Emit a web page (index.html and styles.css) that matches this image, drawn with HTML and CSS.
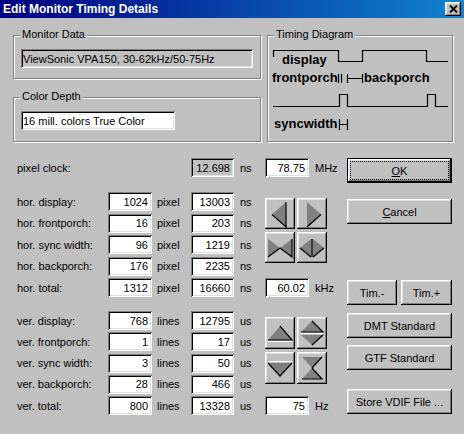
FILE: index.html
```html
<!DOCTYPE html>
<html>
<head>
<meta charset="utf-8">
<link rel="stylesheet" href="styles.css">
</head>
<body>
<div class="window">
  <div class="titlebar">
    <span class="title">Edit Monitor Timing Details</span>
    <span class="close"><svg width="9" height="8" viewBox="0 0 9 8"><path d="M1 0.5 L8 7.5 M8 0.5 L1 7.5" stroke="#000" stroke-width="1.8" fill="none"/></svg></span>
  </div>

  <div class="top">
    <div class="left-groups">
      <div class="group monitor">
        <span class="group-label">Monitor Data</span>
        <div class="field readonly">ViewSonic VPA150, 30-62kHz/50-75Hz</div>
      </div>
      <div class="group color">
        <span class="group-label">Color Depth</span>
        <div class="field combo">16 mill. colors True Color</div>
      </div>
    </div>
    <div class="group diagram">
      <span class="group-label">Timing Diagram</span>
      <svg class="canvas" width="186" height="107" viewBox="0 0 186 107">
        <g fill="none" stroke="#000" stroke-width="1.2">
          <polyline points="6.5,22 6.5,15.5 71.5,15.5 71.5,26.5 95.5,26.5 95.5,15.5 159.5,15.5 159.5,26.5 181,26.5"/>
          <path d="M71.5 39 V48 M74.5 39 V48 M80.5 39 V48 M80.5 43.5 H95.5 M95.5 39 V48"/>
          <polyline points="6,71.5 72.5,71.5 72.5,59.5 80.5,59.5 80.5,71.5 160.5,71.5 160.5,59.5 168.5,59.5 168.5,71.5 181,71.5"/>
          <path d="M72.5 84 V95 M72.5 89.5 H80.5 M80.5 84 V95"/>
        </g>
        <g class="dtext">
          <text x="15" y="29">display</text>
          <text x="5" y="47">frontporch</text>
          <text x="97" y="47">backporch</text>
          <text x="7" y="93">syncwidth</text>
        </g>
      </svg>
    </div>
  </div>

  <div class="bottom">
    <div class="table">
      <div class="row">
        <span class="lbl">pixel clock:</span>
        <span class="field num2 readonly pc">12.698</span>
        <span class="unit2">ns</span>
      </div>
      <div class="rows hor">
        <div class="row"><span class="lbl">hor. display:</span><span class="field num">1024</span><span class="unit1">pixel</span><span class="field num2">13003</span><span class="unit2">ns</span></div>
        <div class="row"><span class="lbl">hor. frontporch:</span><span class="field num">16</span><span class="unit1">pixel</span><span class="field num2">203</span><span class="unit2">ns</span></div>
        <div class="row"><span class="lbl">hor. sync width:</span><span class="field num">96</span><span class="unit1">pixel</span><span class="field num2">1219</span><span class="unit2">ns</span></div>
        <div class="row"><span class="lbl">hor. backporch:</span><span class="field num">176</span><span class="unit1">pixel</span><span class="field num2">2235</span><span class="unit2">ns</span></div>
        <div class="row"><span class="lbl">hor. total:</span><span class="field num">1312</span><span class="unit1">pixel</span><span class="field num2">16660</span><span class="unit2">ns</span></div>
      </div>
      <div class="rows ver">
        <div class="row"><span class="lbl">ver. display:</span><span class="field num">768</span><span class="unit1">lines</span><span class="field num2">12795</span><span class="unit2">us</span></div>
        <div class="row"><span class="lbl">ver. frontporch:</span><span class="field num">1</span><span class="unit1">lines</span><span class="field num2">17</span><span class="unit2">us</span></div>
        <div class="row"><span class="lbl">ver. sync width:</span><span class="field num">3</span><span class="unit1">lines</span><span class="field num2">50</span><span class="unit2">us</span></div>
        <div class="row"><span class="lbl">ver. backporch:</span><span class="field num">28</span><span class="unit1">lines</span><span class="field num2">466</span><span class="unit2">us</span></div>
        <div class="row"><span class="lbl">ver. total:</span><span class="field num">800</span><span class="unit1">lines</span><span class="field num2">13328</span><span class="unit2">us</span></div>
      </div>
    </div>

    <div class="mid">
      <div class="row"><span class="field num">78.75</span><span class="unit3">MHz</span></div>
      <div class="arrows harrows">
        <span class="abtn"><svg width="30" height="31" viewBox="0 0 30 31"><polygon points="7,16.5 21,4 21,29" fill="#808080"/><polyline points="7,16.5 21,29 21,4" fill="none" stroke="#000" stroke-width="1.2"/></svg></span>
        <span class="abtn"><svg width="30" height="31" viewBox="0 0 30 31"><polygon points="10,4 24,16.5 10,29" fill="#808080"/><polyline points="10,29 24,16.5" fill="none" stroke="#000" stroke-width="1.2"/></svg></span>
        <span class="abtn"><svg width="30" height="31" viewBox="0 0 30 31"><polygon points="3,7 15,16 3,25" fill="#808080"/><polygon points="27,7 15,16 27,25" fill="#808080"/><polyline points="3,25 15,16" fill="none" stroke="#000" stroke-width="1.2"/><polyline points="15,16 27,25 27,7" fill="none" stroke="#000" stroke-width="1.2"/></svg></span>
        <span class="abtn"><svg width="30" height="31" viewBox="0 0 30 31"><polygon points="3,16 14,7 14,25" fill="#808080"/><polygon points="16,7 27,16 16,25" fill="#808080"/><polyline points="3,16 14,25" fill="none" stroke="#000" stroke-width="1.2"/><line x1="15" y1="7" x2="15" y2="25" stroke="#000" stroke-width="1.4"/><polyline points="16,25 27,16" fill="none" stroke="#000" stroke-width="1.2"/></svg></span>
      </div>
      <div class="row khz"><span class="field num">60.02</span><span class="unit3">kHz</span></div>
      <div class="arrows varrows">
        <span class="abtn"><svg width="30" height="32" viewBox="0 0 30 32"><polygon points="3,23 15,9 27,23" fill="#808080"/><polyline points="15,9 27,23 3,23" fill="none" stroke="#000" stroke-width="1.2"/><line x1="3" y1="24.5" x2="27" y2="24.5" stroke="#fff"/></svg></span>
        <span class="abtn"><svg width="30" height="32" viewBox="0 0 30 32"><polygon points="4,15 15,4 26,15" fill="#808080"/><polyline points="15,4 26,15 4,15" fill="none" stroke="#000" stroke-width="1.2"/><line x1="4" y1="16.5" x2="26" y2="16.5" stroke="#fff"/><polygon points="4,18 26,18 15,28" fill="#808080"/><polyline points="26,18 15,28" fill="none" stroke="#000" stroke-width="1.2"/></svg></span>
        <span class="abtn"><svg width="30" height="32" viewBox="0 0 30 32"><line x1="3" y1="9.5" x2="27" y2="9.5" stroke="#fff"/><polygon points="3,11 27,11 15,24" fill="#808080"/><polyline points="3,11 15,24 27,11" fill="none" stroke="#000" stroke-width="1.2"/></svg></span>
        <span class="abtn"><svg width="30" height="32" viewBox="0 0 30 32"><polygon points="5,5 25,5 15,16" fill="#808080"/><polyline points="25,5 15,16" fill="none" stroke="#000" stroke-width="1.2"/><polygon points="15,16 25,27 5,27" fill="#808080"/><polyline points="15,16 25,27 5,27" fill="none" stroke="#000" stroke-width="1.2"/></svg></span>
      </div>
      <div class="row hz"><span class="field num">75</span><span class="unit3">Hz</span></div>
    </div>

    <div class="btns">
      <div class="btn default"><span class="focus"><span><u>O</u>K</span></span></div>
      <div class="btn cancel"><span><u>C</u>ancel</span></div>
      <div class="timrow">
        <div class="btn tim-minus">Tim.-</div>
        <div class="btn tim-plus">Tim.+</div>
      </div>
      <div class="btn dmt">DMT Standard</div>
      <div class="btn gtf">GTF Standard</div>
      <div class="btn store">Store VDIF File ...</div>
    </div>
  </div>
</div>
</body>
</html>
```

FILE: styles.css
```css
* { box-sizing: border-box; }

body {
  margin: 0;
  background: #c0c0c0;
  font-family: "Liberation Sans", Arial, sans-serif;
  font-size: 11px;
  color: #000;
}

.window {
  width: 464px;
  height: 434px;
  overflow: hidden;
  background: #c0c0c0;
}

.titlebar {
  height: 18px;
  display: flex;
  align-items: center;
  justify-content: space-between;
  padding: 0 3px 0 3px;
  background: linear-gradient(90deg, #000080, #1084d0);
}

.title {
  color: #fff;
  font-weight: bold;
  font-size: 12px;
  line-height: 18px;
}

.close {
  width: 16px;
  height: 14px;
  background: #c0c0c0;
  display: flex;
  align-items: center;
  justify-content: center;
  box-shadow: inset -1px -1px #000, inset 1px 1px #fff, inset -2px -2px #808080, inset 2px 2px #dfdfdf;
}

/* group boxes */
.top {
  display: flex;
  gap: 6px;
  margin: 17px 0 0 13px;
}

.left-groups {
  display: flex;
  flex-direction: column;
}

.group {
  position: relative;
  border: 1px solid #808080;
  box-shadow: inset 1px 1px #fff, 1px 1px #fff;
}

.group-label {
  position: absolute;
  top: -8px;
  left: 6px;
  padding: 0 2px;
  background: #c0c0c0;
  line-height: 13px;
}

.monitor {
  width: 248px;
  height: 44px;
  padding: 13px 7px 0;
}

.color {
  width: 248px;
  height: 45px;
  margin-top: 18px;
  padding: 13px 7px 0;
}

.color .field { width: 154px; }

.diagram {
  width: 186px;
  height: 107px;
}

.canvas {
  position: absolute;
  top: -1px;
  left: -1px;
}

.dtext text {
  font-family: "Liberation Sans", Arial, sans-serif;
  font-weight: bold;
  font-size: 13px;
  fill: #000;
}

/* fields */
.field {
  height: 19px;
  display: flex;
  align-items: center;
  padding: 0 2px;
  background: #fff;
  white-space: nowrap;
  box-shadow: inset 1px 1px #808080, inset -1px -1px #fff, inset 2px 2px #000, inset -2px -2px #dfdfdf;
}

.field.readonly { background: #c0c0c0; }

.num, .num2 {
  justify-content: flex-end;
  padding: 0 4px 0 0;
}

.num { width: 44px; }
.num2 { width: 43px; }

/* bottom area */
.bottom {
  display: flex;
  margin-top: 16px;
}

.table {
  width: 248px;
  margin-left: 17px;
  display: flex;
  flex-direction: column;
}

.row {
  display: flex;
  align-items: center;
  height: 19px;
}

.lbl { width: 91px; flex: none; }

.pc { margin-left: 83px; }

.unit1 { width: 39px; padding-left: 5px; }
.unit2 { padding-left: 6px; }
.unit3 { padding-left: 6px; }

.rows {
  display: flex;
  flex-direction: column;
}

.hor { margin-top: 15px; gap: 2.5px; }
.ver { margin-top: 14px; gap: 2.25px; }

.mid {
  width: 82px;
  display: flex;
  flex-direction: column;
}

.arrows {
  display: grid;
  grid-template-columns: 30px 30px;
  column-gap: 2px;
  row-gap: 3px;
}

.harrows { margin-top: 21px; grid-auto-rows: 31px; }
.khz { margin-top: 15px; }
.varrows { margin-top: 20px; grid-auto-rows: 32px; }
.hz { margin-top: 12px; }

.abtn {
  display: flex;
  align-items: center;
  justify-content: center;
  background: #c0c0c0;
  box-shadow: inset -1px -1px #000, inset 1px 1px #fff, inset -2px -2px #808080, inset 2px 2px #dfdfdf;
}

/* push buttons */
.btns {
  width: 105px;
  display: flex;
  flex-direction: column;
}

.btn {
  height: 25px;
  display: flex;
  align-items: center;
  justify-content: center;
  background: #c0c0c0;
  box-shadow: inset -1px -1px #000, inset 1px 1px #fff, inset -2px -2px #808080, inset 2px 2px #dfdfdf;
}

.btn.default {
  border: 1px solid #000;
  align-items: stretch;
  justify-content: stretch;
}

.focus {
  flex: 1;
  margin: 2px;
  border: 1px dotted #000;
  display: flex;
  align-items: center;
  justify-content: center;
}

.cancel { margin-top: 16px; }

.timrow {
  display: flex;
  gap: 4px;
  margin-top: 56px;
}

.tim-minus { width: 50px; }
.tim-plus { width: 51px; }

.dmt { margin-top: 8px; }
.gtf { margin-top: 7px; }
.store { margin-top: 19px; }
```
